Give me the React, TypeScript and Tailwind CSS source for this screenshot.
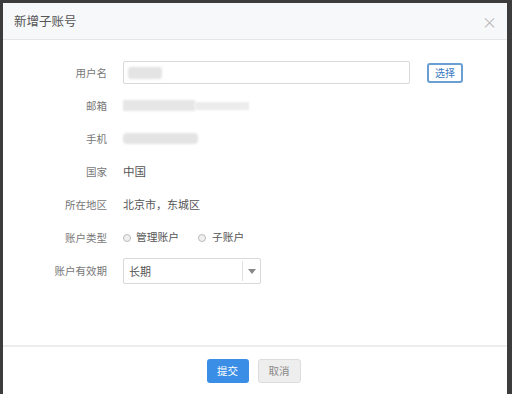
export default function App() {
    // label column + value column rows
    const rowLabel = "w-[104px] shrink-0 text-right text-[10.5px] text-[#777]";

    return (
        <div className="w-[512px] h-[394px] bg-[#3c3c3c] pt-[3px] pl-[3px] pr-[5px] overflow-hidden" style={{ fontFamily: '"Noto Sans CJK SC", "Noto Sans", sans-serif' }}>
            <div className="bg-white h-full flex flex-col">
                <div className="h-[37px] bg-[#f7f8fa] border-b border-[#e6e6e6] flex items-center justify-between pl-[11px] pr-[10px]">
                    <span className="text-[12.5px] text-[#555]">新增子账号</span>
                    <span className="text-[15px] text-[#bbb] leading-none">×</span>
                </div>

                <div className="flex-1 pt-[16px]">
                    <div className="h-[33px] flex items-center">
                        <div className={rowLabel}>用户名</div>
                        <div className="ml-[16px] w-[287px] h-[23px] border border-[#d9d9d9] rounded-[2px] flex items-center pl-[4px]">
                            <div className="w-[34px] h-[12px] bg-[#e4e4e4] rounded-[3px] blur-[1px]"></div>
                        </div>
                        <button className="ml-[17px] w-[36px] h-[20px] border-2 border-[#6a9fd4] rounded-[3px] text-[10px] text-[#3a78c0] flex items-center justify-center">选择</button>
                    </div>
                    <div className="h-[33px] flex items-center">
                        <div className={rowLabel}>邮箱</div>
                        <div className="ml-[16px] flex items-center">
                            <div className="w-[72px] h-[11px] bg-[#e6e6e6] blur-[1px]"></div>
                            <div className="w-[54px] h-[8px] bg-[#ececec] blur-[1px]"></div>
                        </div>
                    </div>
                    <div className="h-[33px] flex items-center">
                        <div className={rowLabel}>手机</div>
                        <div className="ml-[16px] w-[75px] h-[11px] bg-[#e4e4e4] rounded-[4px] blur-[1px]"></div>
                    </div>
                    <div className="h-[33px] flex items-center">
                        <div className={rowLabel}>国家</div>
                        <div className="ml-[16px] text-[11.5px] text-[#555]">中国</div>
                    </div>
                    <div className="h-[33px] flex items-center">
                        <div className={rowLabel}>所在地区</div>
                        <div className="ml-[16px] text-[11px] text-[#555]">北京市，东城区</div>
                    </div>
                    <div className="h-[33px] flex items-center">
                        <div className={rowLabel}>账户类型</div>
                        <div className="ml-[16px] flex items-center text-[10.75px] text-[#555]">
                            <span className="w-[8px] h-[8px] rounded-full border border-[#bbb] bg-[#f0f0f0]"></span>
                            <span className="ml-[5px]">管理账户</span>
                            <span className="ml-[19px] w-[8px] h-[8px] rounded-full border border-[#bbb] bg-[#f0f0f0]"></span>
                            <span className="ml-[6px]">子账户</span>
                        </div>
                    </div>
                    <div className="h-[34px] flex items-center">
                        <div className={rowLabel}>账户有效期</div>
                        <div className="ml-[16px] w-[138px] h-[26px] border border-[#d9d9d9] rounded-[2px] flex items-center">
                            <span className="flex-1 pl-[5px] text-[11px] text-[#555]">长期</span>
                            <span className="w-px h-[20px] bg-[#e0e0e0]"></span>
                            <span className="w-[17px] flex justify-center">
                                <svg width="8" height="5" viewBox="0 0 8 5"><path d="M0 0 L8 0 L4 5 Z" fill="#888" /></svg>
                            </span>
                        </div>
                    </div>
                </div>

                <div className="h-[49px] border-t-2 border-[#ededed] flex items-center justify-center gap-[9px] pr-[3px]">
                    <button className="w-[42px] h-[24px] bg-[#3a8ee6] rounded-[3px] text-[10.5px] text-white">提交</button>
                    <button className="w-[43px] h-[24px] bg-[#eeeeee] border border-[#dcdcdc] rounded-[3px] text-[10.5px] text-[#888]">取消</button>
                </div>
            </div>
        </div>
    );
}
